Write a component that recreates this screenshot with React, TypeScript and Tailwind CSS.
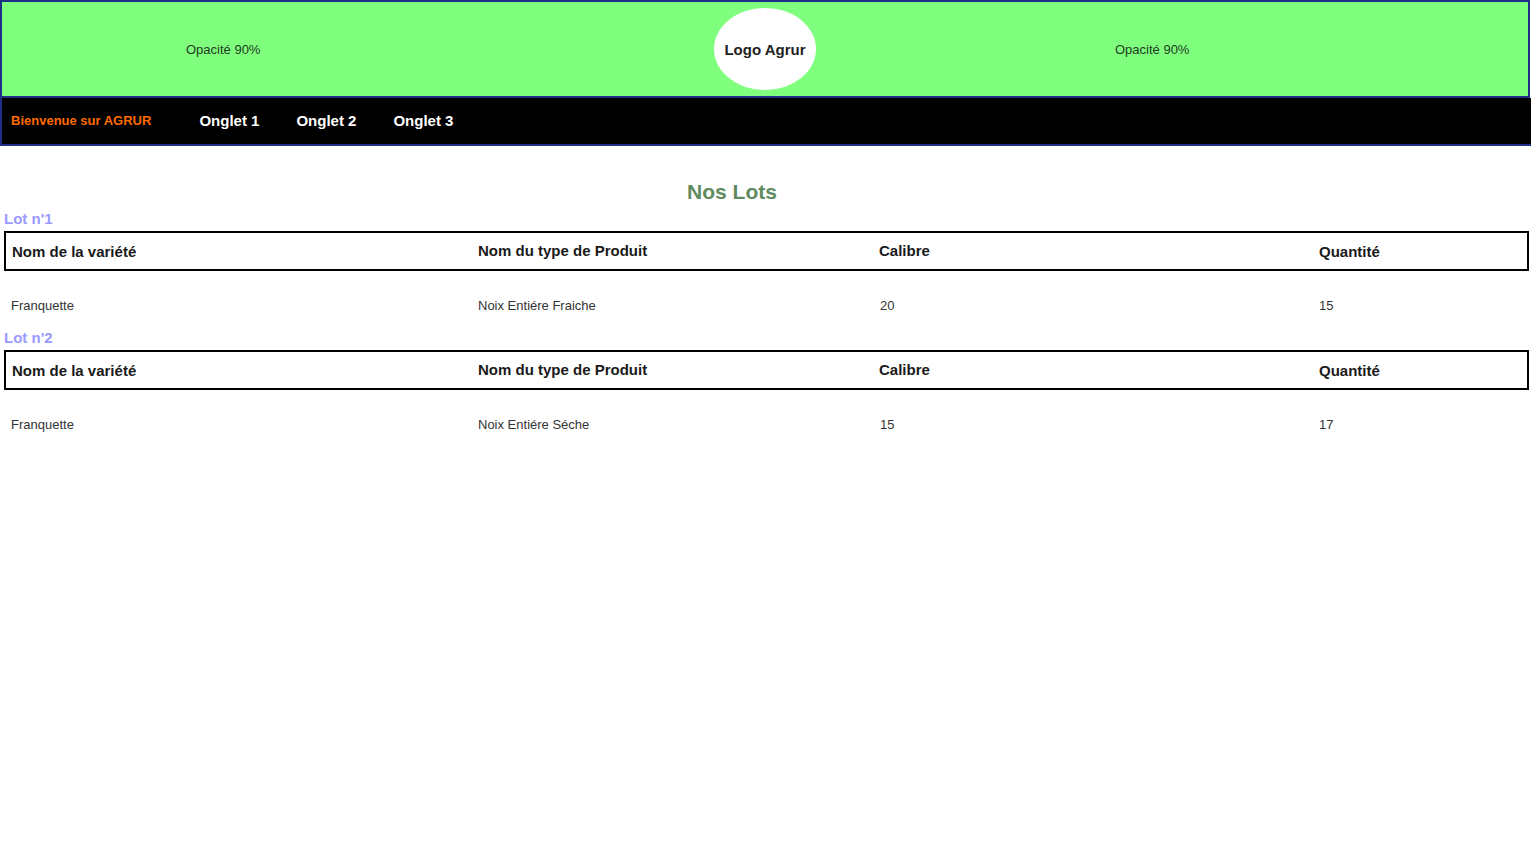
const lots = [
  { id: 1, variete: "Franquette", produit: "Noix Entiére Fraiche", calibre: "20", quantite: "15" },
  { id: 2, variete: "Franquette", produit: "Noix Entiére Séche", calibre: "15", quantite: "17" },
];

const LotTable = ({ lot }: { lot: (typeof lots)[number] }) => {
  return (
    <div>
      <div className="h-[18px] pl-1 mb-1 text-[15px] leading-[20px] font-bold text-[#9a9aff]">Lot n'{lot.id}</div>
      <div className="ml-1 mr-[2px] border-2 border-black h-10 grid grid-cols-[466px_401px_440px_1fr] items-center text-[15px] font-bold text-[#1a1a1a]">
        <div className="pl-[6px] pt-[2px]">Nom de la variété</div>
        <div className="pl-[6px]">Nom du type de Produit</div>
        <div className="pl-[6px]">Calibre</div>
        <div className="pl-[6px] pt-[3px]">Quantité</div>
      </div>
      <div className="ml-1 h-[57px] pt-[27px] grid grid-cols-[466px_401px_440px_1fr] text-[13px] leading-4 text-[#333]">
        <div className="pl-[7px]">{lot.variete}</div>
        <div className="pl-[8px]">{lot.produit}</div>
        <div className="pl-[9px]">{lot.calibre}</div>
        <div className="pl-[8px]">{lot.quantite}</div>
      </div>
    </div>
  );
};

export default function App() {
  return (
    <div className="min-h-screen bg-white font-['Liberation_Sans',Arial,sans-serif]">
      {/* bandeau */}
      <div className="mr-[1px] h-[98px] border-2 border-[#1f2f88] bg-[#80ff7f] flex items-center">
        <div className="ml-[184px] w-[75px] pt-[2px] text-[13px] text-[#1d3b1d] whitespace-nowrap">Opacité 90%</div>
        <div className="ml-[453px] w-[102px] h-[82px] rounded-[50%] bg-white flex items-center justify-center pt-[2px] text-[15px] font-bold text-[#222]">
          Logo Agrur
        </div>
        <div className="ml-[299px] pt-[2px] text-[13px] text-[#1d3b1d] whitespace-nowrap">Opacité 90%</div>
      </div>

      {/* navigation */}
      <nav className="h-[48px] bg-black border-l-2 border-b-2 border-[#1f2f88] flex items-center">
        <span className="ml-[9px] text-[13px] font-bold text-[#ff6a00]">Bienvenue sur AGRUR</span>
        <div className="ml-[48px] flex gap-[37px] text-[15px] font-bold text-white">
          <a>Onglet 1</a>
          <a>Onglet 2</a>
          <a>Onglet 3</a>
        </div>
      </nav>

      <main>
        <h2 className="pt-[34px] pr-[67px] h-[57px] leading-6 text-center text-[21px] font-bold text-[#5f8b5f] mb-[6px]">Nos Lots</h2>
        {lots.map((lot) => (
          <LotTable key={lot.id} lot={lot} />
        ))}
      </main>
    </div>
  );
}
